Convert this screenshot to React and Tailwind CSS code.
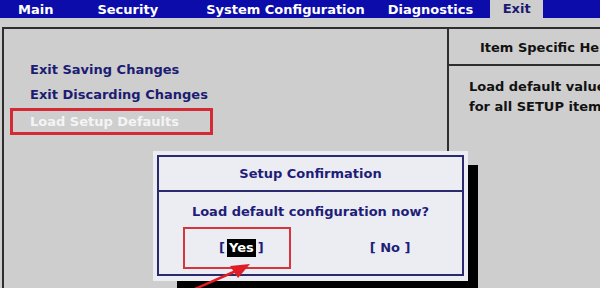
import React from "react";

const tabs = [
  { label: "Main", cls: "ml-[18px]" },
  { label: "Security", cls: "ml-[44px]" },
  { label: "System Configuration", cls: "ml-[48px]" },
  { label: "Diagnostics", cls: "ml-[23px]" },
];

export default function App() {
  return (
    <div className="relative w-[600px] h-[288px] overflow-hidden bg-[#cecece] font-['DejaVu_Sans',sans-serif] font-bold">
      {/* Tab bar */}
      <div className="flex h-[18px] items-center bg-[#0c0caa] text-[13px] text-white">
        {tabs.map((t) => (
          <span key={t.label} className={t.cls + " leading-none"}>
            {t.label}
          </span>
        ))}
        <div className="ml-[17px] flex h-full w-[53px] items-center justify-center bg-[#cecece] text-[#1a1a70]">
          Exit
        </div>
      </div>

      <div className="h-[9px]" />

      {/* Main panel */}
      <div className="ml-[2px] flex h-[261px] border-l-2 border-t-2 border-[#2e2e2e]">
        {/* Left menu */}
        <div className="w-[443px] shrink-0 pt-[28px] text-[13px] text-[#1c1c72]">
          <div className="h-[25px] pl-[26px] leading-[25px]">Exit Saving Changes</div>
          <div className="h-[25px] pl-[26px] leading-[25px]">Exit Discarding Changes</div>
          <div className="ml-[6px] mt-[1px] h-[27px] w-[203px] border-[3px] border-[#d42a36] pl-[17px] leading-[21px] text-[#f4f4f4]">
            Load Setup Defaults
          </div>
        </div>

        {/* Item specific help */}
        <div className="min-w-0 flex-1 overflow-hidden border-l-2 border-[#2e2e2e] text-[13px] text-[#121212]">
          <div className="h-[37px] whitespace-nowrap border-b-2 border-[#2e2e2e] pl-[31px] leading-[37px]">
            Item Specific Help
          </div>
          <div className="whitespace-nowrap pl-[20px] pt-[11px] leading-[20px]">
            <div>Load default values</div>
            <div>for all SETUP items</div>
          </div>
        </div>
      </div>

      {/* Dialog shadow */}
      <div className="absolute left-[177px] top-[165px] h-[130px] w-[301px] bg-black" />

      {/* Setup Confirmation dialog */}
      <div className="absolute left-[153px] top-[151px] h-[130px] w-[315px] bg-[#ececf3] p-[4px] text-[13px] text-[#1e1e78]">
        <div className="relative flex h-[121px] flex-col border-2 border-[#2a2a6c]">
          <div className="h-[35px] border-b-2 border-[#2a2a6c] text-center leading-[33px]">
            Setup Confirmation
          </div>
          <div className="pt-[10px] text-center leading-[20px]">Load default configuration now?</div>
          <div className="mt-[17px] flex items-center leading-[18px]">
            <span className="ml-[60px] flex items-center">
              [<span className="mx-[2px] bg-black px-[2px] text-white">Yes</span>]
            </span>
            <span className="ml-[106px]">[ No ]</span>
          </div>
          {/* annotation box */}
          <div className="absolute left-[24px] top-[70px] h-[42px] w-[108px] border-2 border-[#d8343e]" />
        </div>
      </div>

      {/* Red arrow */}
      <svg className="absolute left-0 top-0" width="600" height="288" viewBox="0 0 600 288">
        <line x1="188" y1="292" x2="236" y2="271" stroke="#e01c24" strokeWidth="2.5" />
        <polygon points="250,264 230,266 238,278" fill="#e01c24" />
      </svg>
    </div>
  );
}
